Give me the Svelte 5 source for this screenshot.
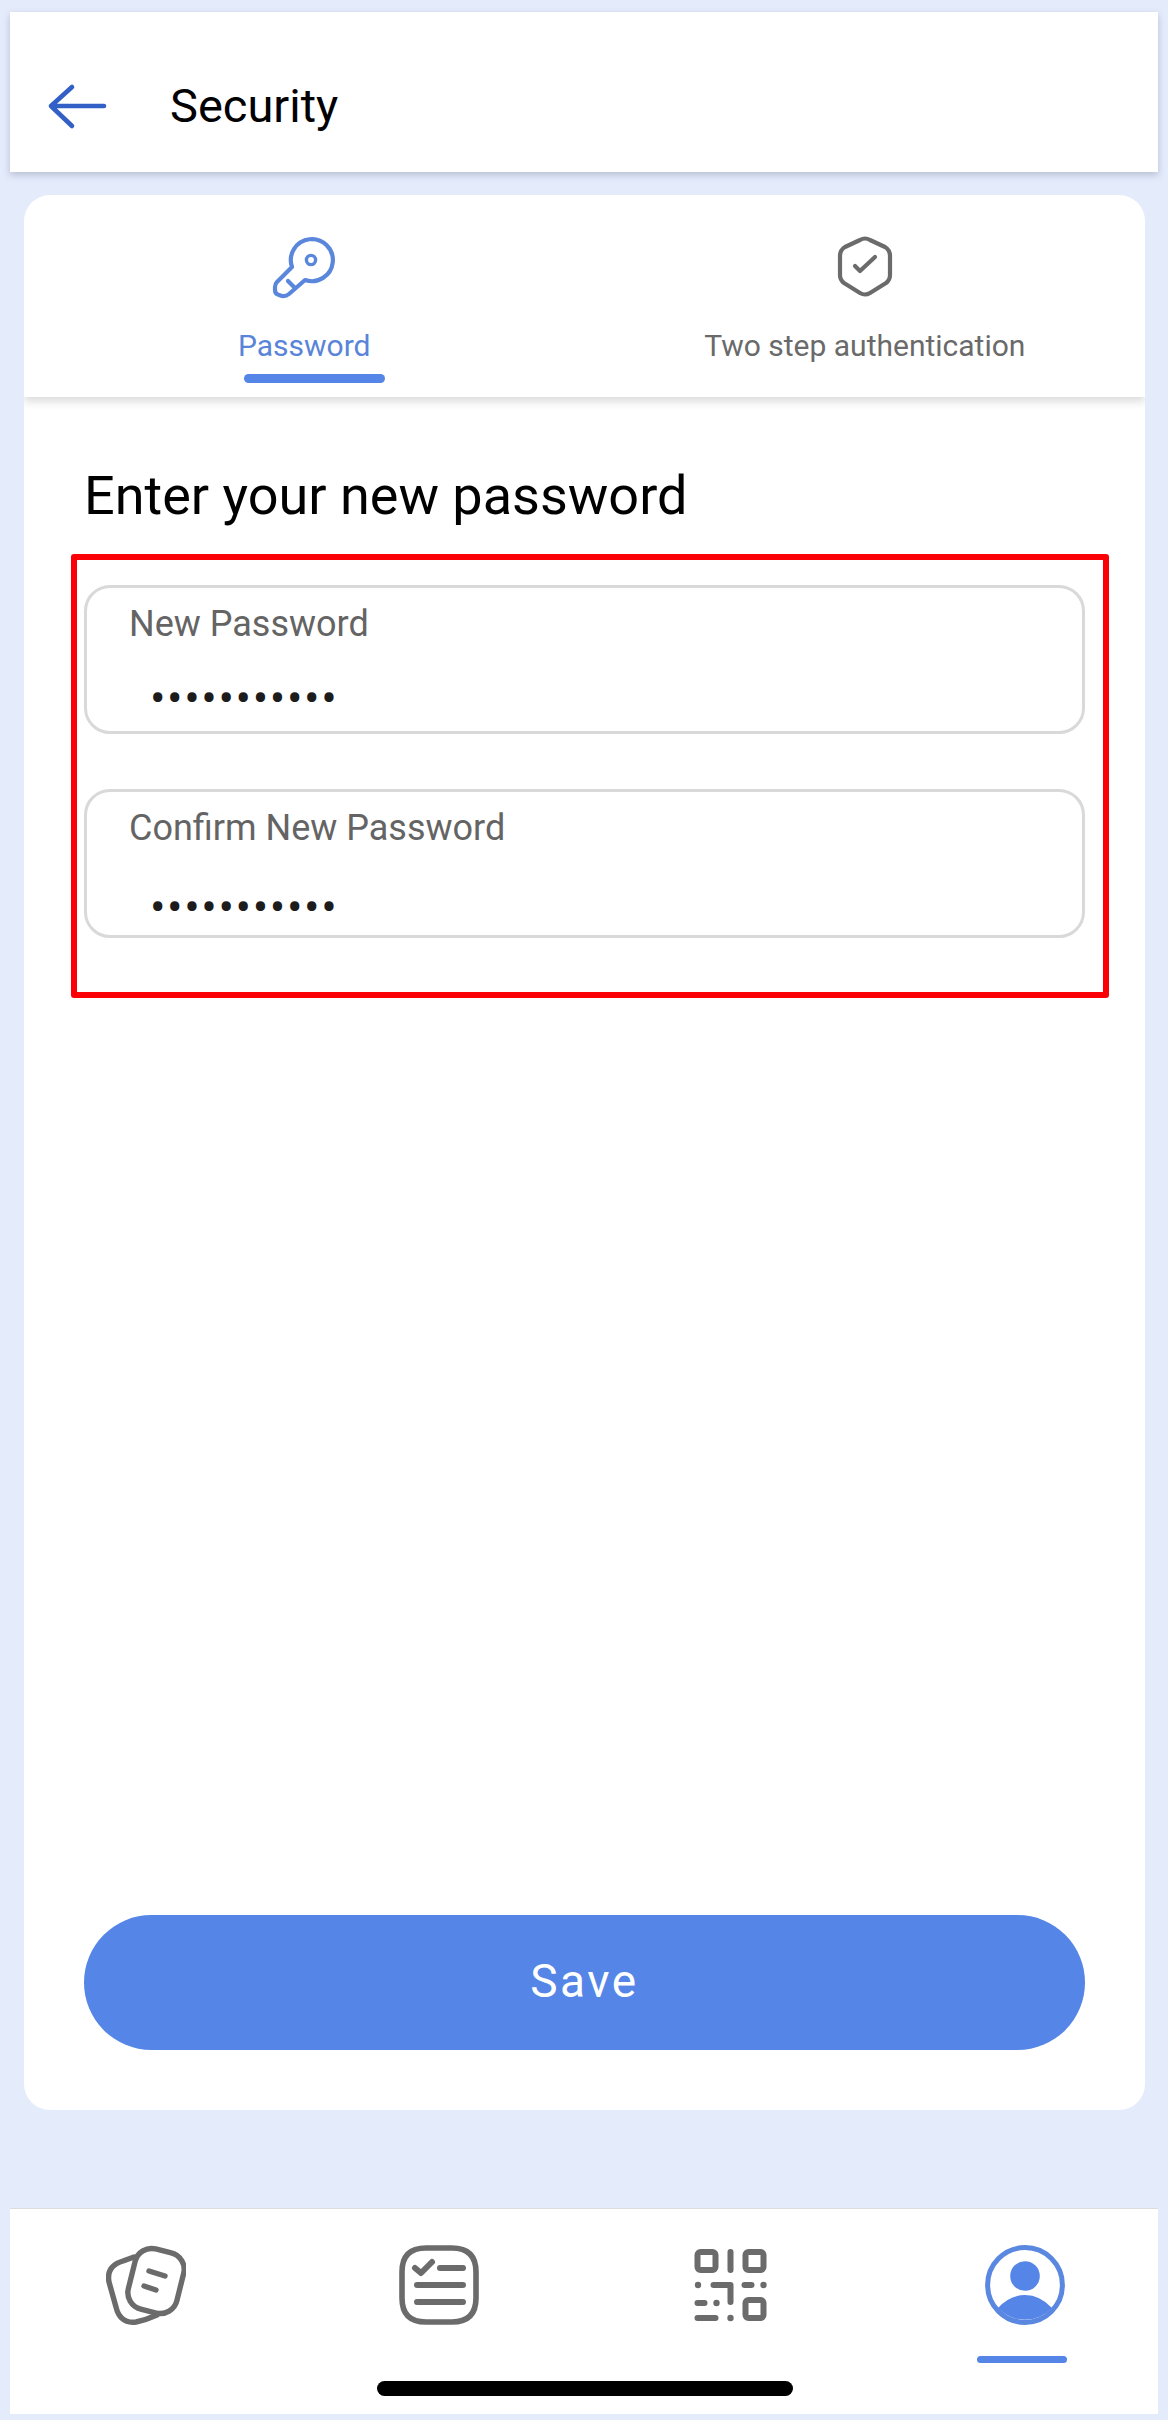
<script>
  const fields = [
    { label: 'New Password', value: 'password123' },
    { label: 'Confirm New Password', value: 'password123' }
  ];
</script>

<div class="page">
  <header class="topbar">
    <button class="back" aria-label="Back">
      <svg width="70" height="50" viewBox="0 0 70 50" fill="none" stroke="#3360c6" stroke-width="4.6" stroke-linecap="round" stroke-linejoin="round">
        <path d="M6 25H59M27 6L6 25L27 45" />
      </svg>
    </button>
    <h1>Security</h1>
  </header>

  <main class="card">
    <nav class="tabs">
      <div class="tab active">
        <svg width="70" height="70" viewBox="0 0 70 70" fill="none" stroke="#5a87dc" stroke-width="4.2" stroke-linecap="round" stroke-linejoin="round">
          <path d="M23 35L8 50Q6 52 6 55L6 58Q6 62 10 63L13 64Q17 64.5 20 62L36 48A21 21 0 1 0 23 35Z" />
          <circle cx="42" cy="28" r="4.6" stroke-width="3.4" />
          <path d="M19 49L25 55" />
        </svg>
        <span>Password</span>
        <i class="tab-line"></i>
      </div>
      <div class="tab">
        <svg width="70" height="70" viewBox="0 0 70 70" fill="none" stroke="#6b6b6b" stroke-width="4.2" stroke-linecap="round" stroke-linejoin="round">
          <path d="M30 8Q35 5 40 8L55 15Q60 18 60 24L60 43Q60 48 56 51L40 61Q35 64 30 61L14 51Q10 48 10 43L10 24Q10 18 15 15Z" />
          <path d="M25 34L30 39L45 25" />
        </svg>
        <span>Two step authentication</span>
      </div>
    </nav>

    <section class="body">
      <h2>Enter your new password</h2>
      <form class="fields">
        {#each fields as f}
          <label class="field">
            <span>{f.label}</span>
            <input type="password" value={f.value} readonly />
          </label>
        {/each}
      </form>
      <button class="save">Save</button>
    </section>
  </main>

  <footer class="bottom">
    <div class="nav-item">
      <svg width="80" height="80" viewBox="0 0 80 80" fill="none" stroke="#6b6b6b" stroke-width="5.4" stroke-linecap="round" stroke-linejoin="round">
        <path d="M28 12L17 16Q0 21 3 37L10 62Q14 79 30 77Q40 75 51 70" />
        <rect x="-25" y="-31" width="50" height="62" rx="17" transform="translate(50 36) rotate(14)" />
        <path d="M43 26L59 31M38 41L50 45" />
      </svg>
    </div>
    <div class="nav-item">
      <svg width="80" height="80" viewBox="0 0 80 80" fill="none" stroke="#6b6b6b" stroke-width="5.6" stroke-linecap="round" stroke-linejoin="round">
        <path d="M27 3H53Q77 3 77 27V53Q77 77 53 77H27Q3 77 3 53V27Q3 3 27 3Z" />
        <path d="M16 23L22 28L33 17" stroke-width="6" />
        <path d="M41 23H64M18 40H64M18 57H64" stroke-width="6" />
      </svg>
    </div>
    <div class="nav-item">
      <svg width="80" height="80" viewBox="-2.5 -4 80 80" fill="none" stroke="#6b6b6b" stroke-width="6" stroke-linecap="round" stroke-linejoin="round">
        <rect x="3" y="3" width="18" height="18" rx="3" />
        <rect x="51" y="3" width="18" height="18" rx="3" />
        <rect x="51" y="51" width="18" height="18" rx="3" />
        <path d="M36 3V21M19 36H36V53M50 36H57M3 54H10M3 69H21" />
        <g fill="#6b6b6b" stroke="none">
          <circle cx="3.5" cy="36" r="3.2" />
          <circle cx="69" cy="36" r="3.2" />
          <circle cx="22" cy="54" r="3.2" />
          <circle cx="36" cy="69" r="3.2" />
        </g>
      </svg>
    </div>
    <div class="nav-item current">
      <svg width="80" height="80" viewBox="0 0 80 80" fill="none">
        <circle cx="40" cy="40" r="37.4" stroke="#5a87e0" stroke-width="5" />
        <circle cx="40" cy="31" r="14.8" fill="#5585e6" />
        <path d="M13 63Q25 50 40 50Q55 50 67 63A37 37 0 0 1 13 63Z" fill="#5585e6" />
      </svg>
      <i class="nav-line"></i>
    </div>
    <i class="home-bar"></i>
  </footer>
</div>

<style>
  :global(body) {
    margin: 0;
    background: #ffffff;
  }
  .page {
    width: 1168px;
    height: 2420px;
    box-sizing: border-box;
    padding: 12px 10px 6px;
    background: #e4ebfb;
    display: flex;
    flex-direction: column;
    font-family: Roboto, "Liberation Sans", sans-serif;
  }
  .topbar {
    height: 160px;
    flex: none;
    background: #fff;
    display: flex;
    align-items: center;
    box-shadow: 0 3px 7px rgba(70, 80, 110, 0.28);
    position: relative;
    z-index: 1;
  }
  .back {
    width: 160px;
    height: 100%;
    border: 0;
    background: none;
    padding: 28px 0 0 35px;
    display: flex;
    align-items: center;
    flex: none;
  }
  h1 {
    margin: 26px 0 0;
    font-size: 47px;
    font-weight: 400;
    color: #000;
  }
  .card {
    margin: 23px 13px 0 14px;
    height: 1915px;
    flex: none;
    background: #fff;
    border-radius: 26px;
    display: flex;
    flex-direction: column;
    overflow: hidden;
  }
  .tabs {
    height: 202px;
    flex: none;
    display: grid;
    grid-template-columns: 1fr 1fr;
    box-shadow: 0 4px 9px rgba(60, 60, 70, 0.2);
  }
  .tab {
    display: flex;
    flex-direction: column;
    align-items: center;
    padding-top: 37px;
    font-size: 30px;
    color: #6a6a6a;
  }
  .tab svg {
    display: block;
  }
  .tab span {
    margin-top: 26px;
    line-height: 36px;
  }
  .tab.active {
    color: #5a84d8;
  }
  .tab-line {
    width: 141px;
    height: 9px;
    margin: 10px 0 0 20px;
    border-radius: 5px;
    background: #5585e6;
  }
  .body {
    flex: 1;
    display: flex;
    flex-direction: column;
    padding: 0 60px 60px;
  }
  h2 {
    margin: 69px 0 0;
    font-size: 54px;
    line-height: 60px;
    font-weight: 400;
    color: #000;
  }
  .fields {
    margin: 28px -24px 0 -13px;
    height: 444px;
    box-sizing: border-box;
    border: 6px solid #fb0007;
    border-radius: 3px;
    padding: 25px 18px 0 7px;
    display: flex;
    flex-direction: column;
    gap: 55px;
  }
  .field {
    height: 149px;
    box-sizing: border-box;
    border: 3px solid #d9d9d9;
    border-radius: 26px;
    padding: 14px 42px 0;
    display: flex;
    flex-direction: column;
    flex: none;
  }
  .field span {
    font-size: 36px;
    line-height: 44px;
    color: #646464;
  }
  .field input {
    border: 0;
    outline: 0;
    padding: 0 0 0 21px;
    margin-top: 27px;
    height: 50px;
    width: 400px;
    background: none;
    font: 400 46px Roboto, sans-serif;
    letter-spacing: 1.6px;
    color: #1c1c1c;
  }
  .field + .field input {
    margin-top: 32px;
  }
  .save {
    margin-top: auto;
    height: 135px;
    border: 0;
    border-radius: 68px;
    padding: 0 0 4px;
    background: #5585e6;
    color: #fff;
    font: 400 46px Roboto, sans-serif;
    letter-spacing: 2.5px;
  }
  .bottom {
    margin-top: auto;
    height: 206px;
    flex: none;
    box-sizing: border-box;
    border-top: 1px solid #dcdcdf;
    background: #fff;
    padding: 36px 0 0 96px;
    display: flex;
    gap: 213px;
    position: relative;
  }
  .nav-item {
    width: 80px;
    height: 80px;
    display: flex;
    flex-direction: column;
    align-items: center;
    position: relative;
  }
  .nav-item svg {
    display: block;
    flex: none;
  }
  .nav-line {
    width: 90px;
    height: 7px;
    margin: 31px 0 0 -7px;
    flex: none;
    border-radius: 4px;
    background: #5585e6;
  }
  .home-bar {
    position: absolute;
    left: 367px;
    top: 172px;
    width: 416px;
    height: 15px;
    border-radius: 8px;
    background: #000;
  }
</style>
